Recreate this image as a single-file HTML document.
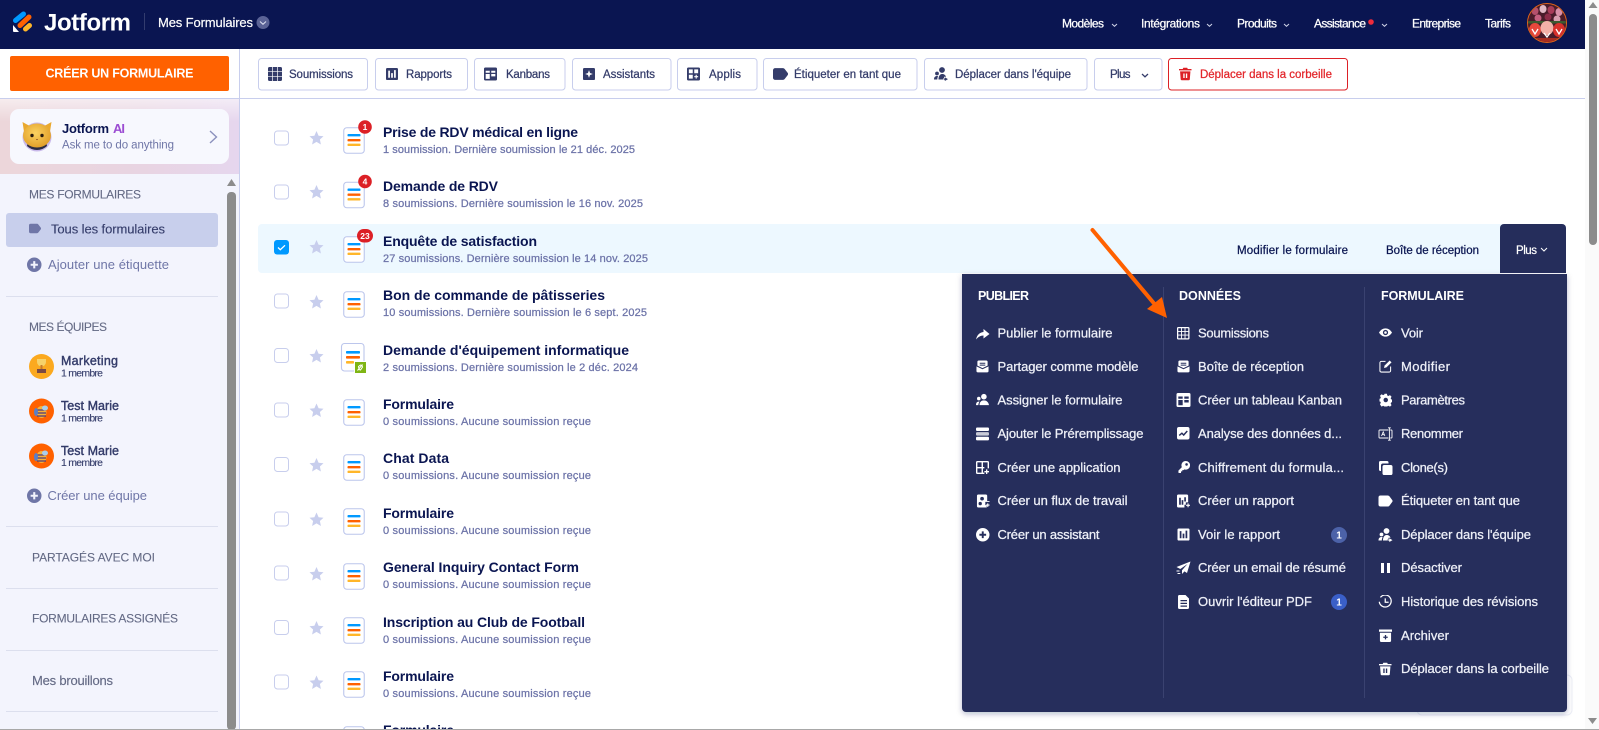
<!DOCTYPE html>
<html lang="fr">
<head>
<meta charset="utf-8">
<title>Jotform - Mes Formulaires</title>
<style>
html,body{margin:0;padding:0;width:1599px;height:730px;overflow:hidden;background:#fff}
svg{display:block;font-family:"Liberation Sans",sans-serif}
text{white-space:pre}
.nav{font-size:12px;fill:#fff;stroke:#fff;stroke-width:.25}
.sec{font-size:12px;fill:#646a85;stroke:#646a85;stroke-width:.1}
.side{font-size:13px;fill:#343c6a;stroke:#343c6a;stroke-width:.12}
.add{font-size:13px;fill:#6f76a7}
.tn{font-size:12.5px;fill:#343c6a;stroke:#343c6a;stroke-width:.4}
.ts{font-size:10.5px;fill:#343c6a;stroke:#343c6a;stroke-width:.1}
.tb{font-size:11.5px;fill:#343c6a;stroke:#343c6a;stroke-width:.25}
.title{font-size:14px;font-weight:bold;fill:#0a1551}
.sub{font-size:11px;fill:#6c73a8;stroke:#6c73a8;stroke-width:.25}
.act{font-size:11.5px;fill:#0a1551;stroke:#0a1551;stroke-width:.25}
.mh{font-size:12.5px;font-weight:bold;fill:#fff}
.mi{font-size:13px;fill:#eef0f8;stroke:#eef0f8;stroke-width:.25}
</style>
</head>
<body>
<svg width="1599" height="730" viewBox="0 0 1599 730" xmlns="http://www.w3.org/2000/svg">
<defs>
<linearGradient id="aibg" x1="0" y1="0" x2="1" y2="0">
  <stop offset="0" stop-color="#ecd6da"/><stop offset=".6" stop-color="#e8d4e2"/><stop offset="1" stop-color="#e6d6ee"/>
</linearGradient>
<linearGradient id="aitop" x1="0" y1="0" x2="0" y2="1">
  <stop offset="0" stop-color="#fff" stop-opacity=".55"/><stop offset=".3" stop-color="#fff" stop-opacity="0"/>
</linearGradient>
<radialGradient id="catf" cx=".45" cy=".4" r=".6">
  <stop offset="0" stop-color="#fbd261"/><stop offset="1" stop-color="#e2a02a"/>
</radialGradient>
<filter id="sh" x="-5%" y="-5%" width="110%" height="110%"><feDropShadow dx="0" dy="2" stdDeviation="3" flood-color="#0a1551" flood-opacity=".28"/></filter>
<clipPath id="prof"><circle cx="1547" cy="23" r="19"/></clipPath>

<symbol id="doc" viewBox="0 0 22 27">
  <rect x=".75" y=".75" width="20.5" height="25.5" rx="3" fill="#fff" stroke="#bcc6ec" stroke-width="1.1"/>
  <rect x="4.5" y="7" width="13" height="2.4" rx=".8" fill="#0099ff"/>
  <rect x="4.5" y="12" width="13" height="2.4" rx=".8" fill="#ff6100"/>
  <rect x="4.5" y="16.6" width="13" height="2.4" rx=".8" fill="#ffb629"/>
</symbol>
<symbol id="star" viewBox="-7 -7 14 14"><path fill="#c8ceed" d="M0-7 2.1-2.3 7-1.8 3.4 1.5 4.4 6.5 0 3.9-4.4 6.5-3.4 1.5-7-1.8-2.1-2.3z"/></symbol>
<symbol id="grid" viewBox="0 0 14 14"><path fill-rule="evenodd" d="M1.5 0h11A1.5 1.5 0 0 1 14 1.5v11a1.5 1.5 0 0 1-1.5 1.5h-11A1.5 1.5 0 0 1 0 12.5v-11A1.5 1.5 0 0 1 1.5 0zM1.4 1.4h3.1v3.1H1.4zM5.5 1.4h3v3.1h-3zM9.5 1.4h3.1v3.1H9.5zM1.4 5.5h3.1v3H1.4zM5.5 5.5h3v3h-3zM9.5 5.5h3.1v3H9.5zM1.4 9.5h3.1v3.1H1.4zM5.5 9.5h3v3.1h-3zM9.5 9.500h3.1v3.1H9.5z"/></symbol>
<symbol id="gridf" viewBox="0 0 14 14"><path d="M1.500 0h2.700v4.200H0V1.500A1.500 1.500 0 0 1 1.500 0zM4.900 0h4.200v4.200H4.900zM9.800 0h2.700A1.500 1.500 0 0 1 14 1.500v2.700H9.800zM0 4.900h4.200v4.200H0zM4.900 4.900h4.200v4.200H4.900zM9.800 4.900H14v4.200H9.800zM0 9.800h4.200V14H1.500A1.500 1.500 0 0 1 0 12.500zM4.900 9.800h4.200V14H4.900zM9.800 9.800H14v2.700a1.500 1.500 0 0 1-1.500 1.500H9.800z"/></symbol>
<symbol id="report" viewBox="0 0 14 14"><path fill-rule="evenodd" d="M1.500 0h11A1.500 1.500 0 0 1 14 1.500v11a1.500 1.500 0 0 1-1.500 1.500h-11A1.500 1.500 0 0 1 0 12.500v-11A1.500 1.500 0 0 1 1.500 0zM2.600 3h2v8.400h-2zM6 6h2v5.400H6zM9.400 2.500h2v8.900h-2z"/></symbol>
<symbol id="kanban" viewBox="0 0 14 14"><path fill-rule="evenodd" d="M1.500 0h11A1.500 1.500 0 0 1 14 1.500v11a1.500 1.500 0 0 1-1.500 1.500h-11A1.500 1.500 0 0 1 0 12.500v-11A1.500 1.500 0 0 1 1.500 0zM1.800 3.500h4.400v2.200H1.800zM7.800 3.500h4.400v2.200H7.800zM1.800 7h4.400v5.200H1.800zM7.800 7h4.400v2.500H7.800z"/></symbol>
<symbol id="assist" viewBox="0 0 14 14"><path fill-rule="evenodd" d="M1.500 0h11A1.500 1.500 0 0 1 14 1.500v11a1.500 1.500 0 0 1-1.500 1.500h-11A1.500 1.500 0 0 1 0 12.500v-11A1.500 1.500 0 0 1 1.500 0zM7 2.500 8.200 5.800 11.500 7 8.200 8.200 7 11.500 5.800 8.200 2.500 7 5.800 5.800z"/></symbol>
<symbol id="apps" viewBox="0 0 14 14"><path fill-rule="evenodd" d="M1.500 0h11A1.500 1.500 0 0 1 14 1.500v11a1.500 1.500 0 0 1-1.500 1.500h-11A1.500 1.500 0 0 1 0 12.500v-11A1.500 1.500 0 0 1 1.500 0zM2 2h4.200v4.200H2zM7.800 2H12v4.200H7.800zM2 7.800h4.200V12H2zM9.300 7.800h1.200v1.500H12v1.200h-1.500V12H9.300v-1.500H7.800V9.300h1.500z"/></symbol>
<symbol id="appso" viewBox="0 0 14 14"><path fill-rule="evenodd" d="M1.500 0h11A1.500 1.500 0 0 1 14 1.500V8h-1.500V1.500h-5v5H9V8H7.500v4.500H9V14H1.500A1.500 1.500 0 0 1 0 12.500v-11A1.500 1.500 0 0 1 1.500 0zM1.500 1.500v5h4.500v-5zM1.500 8v4.500h4.500V8zM10.800 9h1.400v1.800H14v1.400h-1.800V14h-1.400v-1.800H9v-1.400h1.800z"/></symbol>
<symbol id="tag" viewBox="0 0 14 14"><path d="M2 1.500h7.300a2 2 0 0 1 1.600.8l2.800 3.700a1.600 1.600 0 0 1 0 2l-2.800 3.700a2 2 0 0 1-1.600.8H2a2 2 0 0 1-2-2v-7a2 2 0 0 1 2-2z"/></symbol>
<symbol id="team" viewBox="0 0 14 14"><circle cx="8" cy="3" r="2.900"/><circle cx="3" cy="6.500" r="1.900"/><path d="M4.500 12.500C4.500 9 6 7 8 7s3.500 1 4 2.800H10v2.700zM0 12.500C0 10 1.300 9 3 9c.5 0 .9.100 1.200.300-.6 1-.9 2-.9 3.200zM10.800 10.200v1.300H9v1.200h1.800V14L14 12.100z"/></symbol>
<symbol id="trash" viewBox="0 0 14 14"><path fill-rule="evenodd" d="M4.800 0h4.400l.6 1.400H14V3H0V1.400h4.200zM1.200 4h11.600l-.7 9a1.100 1.100 0 0 1-1.100 1H3a1.100 1.100 0 0 1-1.100-1zM4.800 6.500h1.500v5H4.800zM7.700 6.500h1.500v5H7.700z"/></symbol>
<symbol id="plusc" viewBox="0 0 14 14"><path fill-rule="evenodd" d="M7 0a7 7 0 1 1 0 14A7 7 0 0 1 7 0zM6 3.500V6H3.500v2H6v2.500h2V8h2.500V6H8V3.500z"/></symbol>
<symbol id="inbox" viewBox="0 0 14 14"><path d="M3 .5h8A1.500 1.500 0 0 1 12.500 2v4L7 8.700 1.500 6V2A1.500 1.500 0 0 1 3 .5z"/><path d="M.5 6.800 7 10l6.500-3.200v5A1.500 1.500 0 0 1 12 13.300H2a1.500 1.500 0 0 1-1.500-1.500z"/><path d="M4 3h6v1.100H4zM4 5h6v1.100H4z" fill="#252d5b"/></symbol>
<symbol id="assign" viewBox="0 0 14 14"><circle cx="8.500" cy="4" r="3"/><circle cx="3" cy="6" r="1.900"/><path d="M3.800 13c0-3.200 2-5 4.700-5s4.900 1.800 5.500 5zM0 13c0-2.300 1-3.700 3-3.700.3 0 .6 0 .9.100-.9 1-1.300 2.200-1.400 3.600z"/></symbol>
<symbol id="bars" viewBox="0 0 14 14"><rect x="0" y="0" width="14" height="3.800" rx="1.200"/><rect x="0" y="5" width="14" height="3.800" rx="1.200" opacity=".75"/><rect x="0" y="10" width="14" height="3.800" rx="1.200"/></symbol>
<symbol id="flow" viewBox="0 0 14 14"><path fill-rule="evenodd" d="M2 0h8a1.500 1.500 0 0 1 1.500 1.500V7H14v1H9.500v3.500H11V14H2A1.500 1.500 0 0 1 .5 12.500v-11A1.500 1.500 0 0 1 2 0zM6 2.500a2 2 0 1 0 0 4 2 2 0 0 0 0-4zM4 8a1.800 1.800 0 1 0 0 3.600A1.800 1.800 0 0 0 4 8z"/><path d="M11.500 9.500h1.200v1.300H14V12h-1.300v1.300h-1.200V12h-1.300v-1.200h1.300z"/></symbol>
<symbol id="analytics" viewBox="0 0 14 14"><rect width="14" height="14" rx="2.200"/><path d="M2.500 9.500 5.500 7l2 2L11.500 4.500" fill="none" stroke="#252d5b" stroke-width="1.600"/></symbol>
<symbol id="key" viewBox="0 0 14 14"><path fill-rule="evenodd" d="M9 0a5 5 0 1 1-1.600 9.700L6.500 10.600H5v1.500H3.500V14H1l-.5-.5v-2.300l4-4A5 5 0 0 1 9 0zM10 2.500a1.500 1.500 0 1 0 0 3 1.500 1.500 0 0 0 0-3z"/></symbol>
<symbol id="report2" viewBox="0 0 14 14"><path fill-rule="evenodd" d="M1.500 0h9A1.500 1.500 0 0 1 12 1.500V8.500H9.500V11H8v3H1.500A1.500 1.500 0 0 1 0 12.500v-11A1.500 1.500 0 0 1 1.500 0zM2.300 3.500h1.800V11H2.300zM5 6h1.800v5H5zM7.800 3h1.800v4.500H7.800z"/><path d="M11.300 9.500h1.200v1.500H14v1.200h-1.500v1.500h-1.200v-1.500H9.800V11h1.500z"/></symbol>
<symbol id="plane" viewBox="0 0 14 14"><path d="M14 .5 0 6l3.800 2L11 3 5.500 9.300V13l2.500-2.600L10.500 12z"/><path d="M0 9.500h3v1H0zM1 12h2.800v1H1z"/></symbol>
<symbol id="pdf" viewBox="0 0 14 14"><path fill-rule="evenodd" d="M2.500 0H9l3.500 3.500v9A1.500 1.500 0 0 1 11 14H3a1.500 1.500 0 0 1-1.500-1.500v-11A1.500 1.500 0 0 1 2.500 0zM4 5v1.200h6.500V5zM4 7.800V9h6.500V7.800zM4 10.500v1.200h6.500v-1.200z"/></symbol>
<symbol id="eye" viewBox="0 0 14 14"><path fill-rule="evenodd" d="M0 7c1.800-3 4.300-4.500 7-4.500S12.200 4 14 7c-1.800 3-4.300 4.500-7 4.500S1.800 10 0 7zM7 4.200a2.800 2.800 0 1 0 0 5.600 2.800 2.800 0 0 0 0-5.600z"/><circle cx="7" cy="7" r="1.400"/></symbol>
<symbol id="edit" viewBox="0 0 14 14"><path d="M7 1.500H2.500a1.500 1.500 0 0 0-1.500 1.500v8.500A1.500 1.500 0 0 0 2.500 13H11a1.500 1.500 0 0 0 1.500-1.500V7" fill="none" stroke="currentColor" stroke-width="1.100"/><path d="M11.500.5l2 2L8 8l-2.600.6L6 6z"/></symbol>
<symbol id="gear" viewBox="0 0 14 14"><path fill-rule="evenodd" d="M5.700 0h2.600l.4 1.900 1.300.6 1.700-1 1.800 1.800-1 1.700.6 1.300 1.900.4v2.600l-1.900.4-.6 1.300 1 1.700-1.800 1.800-1.700-1-1.300.6-.4 1.900H5.700l-.4-1.900-1.300-.6-1.700 1L.5 11.800l1-1.700-.6-1.300L-1 8.400V5.800l1.900-.4.600-1.300-1-1.700L2.300.6l1.700 1 1.300-.6zM7 4.500a2.500 2.500 0 1 0 0 5 2.500 2.500 0 0 0 0-5z"/></symbol>
<symbol id="rename" viewBox="0 0 14 14"><path d="M10 3H1.200a.7.700 0 0 0-.7.700v6.600a.7.700 0 0 0 .7.700H10M11.800 3h1a.7.700 0 0 1 .7.700v6.600a.7.700 0 0 1-.7.700h-1M10.900 1v12M9.500.8h2.800M9.500 13.200h2.800" fill="none" stroke="currentColor" stroke-width=".9"/><path d="M3 9l1.700-4.200L6.400 9M3.600 7.700h2.200" fill="none" stroke="currentColor" stroke-width=".8"/></symbol>
<symbol id="clone" viewBox="0 0 14 14"><path d="M2 0h6.500A1.500 1.500 0 0 1 10 1.500V2.500H4.500a2 2 0 0 0-2 2V10H2A1.500 1.500 0 0 1 .5 8.500v-7A1.500 1.500 0 0 1 2 0z"/><rect x="4" y="4" width="10" height="10" rx="1.800"/></symbol>
<symbol id="hist" viewBox="0 0 14 14"><path d="M2 2.500A6.200 6.200 0 1 1 .8 7M7 3.500V7.500H10.500" fill="none" stroke="currentColor" stroke-width="1.300"/></symbol>
<symbol id="arch" viewBox="0 0 14 14"><path fill-rule="evenodd" d="M0 .5h14V3H0zM1 4h12v8.500a1.500 1.500 0 0 1-1.500 1.500h-9A1.500 1.500 0 0 1 1 12.500zM6.300 6.500V8.200H4.600v1.300h1.700v1.700h1.400V9.500h1.700V8.200H7.700V6.500z"/></symbol>
</defs>

<!-- Page -->
<rect width="1599" height="730" fill="#fff"/>

<!-- Browser scrollbar -->
<rect x="1585" y="0" width="14" height="730" fill="#fafafa"/>
<path d="M1593 2l4.500 6h-9z" fill="#8c8c8c"/>
<rect x="1589" y="14" width="8" height="231" rx="4" fill="#8c8c8c"/>
<path d="M1588 718h9l-4.500 6z" fill="#8c8c8c"/>

<!-- Sidebar -->
<rect x="0" y="49" width="239" height="681" fill="#fff"/>
<rect x="0" y="99" width="239" height="75" fill="url(#aibg)"/>
<rect x="0" y="99" width="239" height="75" fill="url(#aitop)"/>
<rect x="0" y="174" width="239" height="556" fill="#f3f4fd"/>
<rect x="239" y="49" width="1" height="681" fill="#c8ceed"/>
<rect x="0" y="98" width="1585" height="1" fill="#c8ceed"/>
<rect x="10" y="56" width="219" height="35" rx="2" fill="#ff6100"/>
<text x="45.5" y="77.5" font-size="12.5" font-weight="bold" fill="#fff" textLength="148">CRÉER UN FORMULAIRE</text>

<!-- Jotform AI card -->
<rect x="10" y="109" width="219" height="55" rx="9" fill="#f7f8fe"/>
<circle cx="37" cy="137" r="14.5" fill="#c9b9ea"/>
<path d="M27 146a10 7 0 0 1 20 0 14.5 14.5 0 0 1-20 0z" fill="#2c2d44"/>
<path d="M22.500 122l9 5-7 8zM51.500 122l-9 5 7 8z" fill="#eaa92f"/>
<ellipse cx="37" cy="135.500" rx="14" ry="12" fill="url(#catf)"/>
<circle cx="32" cy="135.500" r="1.700" fill="#2a1c10"/><circle cx="42" cy="135.500" r="1.700" fill="#2a1c10"/>
<path d="M36 139h2l-1 1.200z" fill="#7a3d1a"/>
<text x="62" y="133" font-size="13" font-weight="bold" fill="#0a1551" textLength="47">Jotform</text>
<text x="113" y="133" font-size="13" font-weight="bold" fill="#9c4dd3" textLength="12">AI</text>
<text x="62" y="148.500" font-size="11.5" fill="#6f76a7" textLength="112">Ask me to do anything</text>
<path d="M210 131l6.500 6-6.500 6" fill="none" stroke="#8b91bd" stroke-width="1.400"/>

<!-- Sidebar scrollbar -->
<path d="M231.500 179l4.500 7h-9z" fill="#8c8c8c"/>
<rect x="227" y="192" width="9" height="538" rx="4" fill="#8c8c8c"/>

<!-- Sidebar menu -->
<text class="sec" x="29" y="198.500" textLength="112">MES FORMULAIRES</text>
<rect x="6" y="213" width="212" height="34" rx="3" fill="#c8cfec"/>
<use href="#tag" x="29" y="222" width="12" height="13" fill="#6f76a7"/>
<text class="side" x="51" y="233.500" textLength="114">Tous les formulaires</text>
<use href="#plusc" x="27" y="257.500" width="14.5" height="14.5" fill="#6f76a7"/>
<text class="add" x="48" y="269" textLength="121">Ajouter une étiquette</text>
<rect x="6" y="296" width="212" height="1" fill="#dcdfee"/>
<text class="sec" x="29" y="331" textLength="78">MES ÉQUIPES</text>

<circle cx="41.5" cy="366.5" r="12.5" fill="#fba91f"/>
<path d="M37 359h9v3a4.500 4.500 0 0 1-9 0z" fill="#f6d26a"/><rect x="40.500" y="365" width="2" height="4" fill="#c77a2a"/><rect x="37" y="369" width="9" height="4" fill="#7a4a45"/>
<text class="tn" x="61" y="365" textLength="57">Marketing</text>
<text class="ts" x="61" y="376.5" textLength="42">1 membre</text>

<circle cx="41.5" cy="411" r="12.5" fill="#ff6100"/><ellipse cx="41.5" cy="412" rx="5" ry="6" fill="#f6b13a"/><path d="M37 410h9M37 413h9M37 416h9" stroke="#4d3a7a" stroke-width="1.200"/><ellipse cx="36" cy="412" rx="2" ry="4" fill="#5c7fc4"/><ellipse cx="45" cy="408" rx="3" ry="2.500" fill="#a9cdea"/>
<text class="tn" x="61" y="410" textLength="58">Test Marie</text>
<text class="ts" x="61" y="421.5" textLength="42">1 membre</text>

<g transform="translate(0,45)"><circle cx="41.5" cy="411" r="12.5" fill="#ff6100"/><ellipse cx="41.5" cy="412" rx="5" ry="6" fill="#f6b13a"/><path d="M37 410h9M37 413h9M37 416h9" stroke="#4d3a7a" stroke-width="1.200"/><ellipse cx="36" cy="412" rx="2" ry="4" fill="#5c7fc4"/><ellipse cx="45" cy="408" rx="3" ry="2.500" fill="#a9cdea"/></g>
<text class="tn" x="61" y="455" textLength="58">Test Marie</text>
<text class="ts" x="61" y="466" textLength="42">1 membre</text>

<use href="#plusc" x="27" y="488.500" width="14.5" height="14.5" fill="#6f76a7"/>
<text class="add" x="47.5" y="500" textLength="99.5">Créer une équipe</text>
<rect x="6" y="526" width="212" height="1" fill="#dcdfee"/>
<text class="sec" x="32" y="561.5" textLength="123">PARTAGÉS AVEC MOI</text>
<rect x="6" y="588" width="212" height="1" fill="#dcdfee"/>
<text class="sec" x="32" y="622.5" textLength="146">FORMULAIRES ASSIGNÉS</text>
<rect x="6" y="650" width="212" height="1" fill="#dcdfee"/>
<text x="32" y="685" font-size="13" fill="#646a85" stroke="#646a85" stroke-width=".15" textLength="81">Mes brouillons</text>
<rect x="6" y="711" width="212" height="1" fill="#dcdfee"/>

<!-- Header -->
<rect x="0" y="0" width="1585" height="49" fill="#0a1551"/>
<path d="M15.500 20.500l8-6.500" stroke="#0099ff" stroke-width="5" stroke-linecap="round"/>
<path d="M20 25.500l9-8.500" stroke="#ff6100" stroke-width="5" stroke-linecap="round"/>
<path d="M25.500 29l4-3.500" stroke="#ffb629" stroke-width="5" stroke-linecap="round"/>
<path d="M13 25l6 7h-5a1 1 0 0 1-1-1z" fill="#fff"/>
<text x="44" y="30.500" font-size="24" font-weight="bold" fill="#fff" textLength="87">Jotform</text>
<rect x="144" y="13" width="1" height="17" fill="#333c6e"/>
<text x="158" y="27" font-size="13" fill="#fff" stroke="#fff" stroke-width=".2" textLength="95">Mes Formulaires</text>
<circle cx="263" cy="22.500" r="6.500" fill="#5b6396"/>
<path d="M260 21.500l3 2.800 3-2.800" fill="none" stroke="#dfe2f2" stroke-width="1"/>

<text class="nav" x="1062" y="27.500" textLength="42">Modèles</text>
<path d="M1112 24l2.500 2.300 2.500-2.300" fill="none" stroke="#cfd3e8" stroke-width="1"/>
<text class="nav" x="1141" y="27.500" textLength="59">Intégrations</text>
<path d="M1207 24l2.500 2.300 2.500-2.300" fill="none" stroke="#cfd3e8" stroke-width="1"/>
<text class="nav" x="1237" y="27.500" textLength="40">Produits</text>
<path d="M1284 24l2.500 2.300 2.500-2.300" fill="none" stroke="#cfd3e8" stroke-width="1"/>
<text class="nav" x="1314" y="27.500" textLength="52">Assistance</text>
<circle cx="1371" cy="22" r="2.800" fill="#ef2b3c"/>
<path d="M1382 24l2.500 2.300 2.500-2.300" fill="none" stroke="#cfd3e8" stroke-width="1"/>
<text class="nav" x="1412" y="27.500" textLength="49">Entreprise</text>
<text class="nav" x="1485" y="27.500" textLength="26">Tarifs</text>

<circle cx="1547" cy="23" r="19.5" fill="#7a2a1a" stroke="#e0641a" stroke-width="1"/>
<g clip-path="url(#prof)">
  <rect x="1527" y="3" width="40" height="40" fill="#4a1c2a"/>
  <ellipse cx="1535" cy="11" rx="3.500" ry="4" fill="#b4506c"/><ellipse cx="1543" cy="9" rx="3.500" ry="4" fill="#e0b8c4"/><ellipse cx="1551" cy="10" rx="3.500" ry="4" fill="#a83c58"/><ellipse cx="1559" cy="12" rx="3.500" ry="4" fill="#d890a8"/>
  <ellipse cx="1538" cy="18" rx="3.500" ry="3.500" fill="#c46080"/><ellipse cx="1548" cy="17" rx="3.500" ry="3.500" fill="#8c2c48"/><ellipse cx="1557" cy="19" rx="3.500" ry="3.500" fill="#d8a0b0"/>
  <rect x="1527" y="21" width="40" height="2.500" fill="#3c5a30"/>
  <ellipse cx="1535" cy="30" rx="6" ry="7" fill="#e8483c"/><ellipse cx="1547" cy="28" rx="6.500" ry="7" fill="#f3b0a8"/><ellipse cx="1559" cy="30" rx="6" ry="7" fill="#d8302c"/>
  <path d="M1532 29l3 5 3-5M1544 33l3 4 3-4M1556 29l3 5 3-5" stroke="#fff" stroke-width="1.300" fill="none"/>
  <rect x="1527" y="38" width="40" height="6" fill="#a82c20"/>
</g>

<!-- Toolbar -->
<g fill="#fff" stroke="#c8ceed" stroke-width="1">
  <rect x="258.500" y="58.500" width="109" height="31.500" rx="3"/>
  <rect x="375.500" y="58.500" width="92" height="31.500" rx="3"/>
  <rect x="474.500" y="58.500" width="90.500" height="31.500" rx="3"/>
  <rect x="572.500" y="58.500" width="98.500" height="31.500" rx="3"/>
  <rect x="677.500" y="58.500" width="79.500" height="31.500" rx="3"/>
  <rect x="763.500" y="58.500" width="153.500" height="31.500" rx="3"/>
  <rect x="924.500" y="58.500" width="162.500" height="31.500" rx="3"/>
  <rect x="1094.500" y="58.500" width="67.500" height="31.500" rx="3"/>
  <rect x="1168.500" y="58.500" width="179" height="31.500" rx="3" stroke="#dc2026"/>
</g>
<use href="#gridf" x="268" y="67" width="14" height="14" fill="#343c6a"/>
<text class="tb" x="289" y="78" textLength="64">Soumissions</text>
<use href="#report" x="386" y="66.500" width="12" height="15" preserveAspectRatio="none" fill="#343c6a"/>
<text class="tb" x="406" y="78" textLength="46">Rapports</text>
<use href="#kanban" x="484" y="67" width="13" height="14" preserveAspectRatio="none" fill="#343c6a"/>
<text class="tb" x="506" y="78" textLength="44">Kanbans</text>
<use href="#assist" x="583" y="66.500" width="12" height="15" preserveAspectRatio="none" fill="#343c6a"/>
<text class="tb" x="603" y="78" textLength="52">Assistants</text>
<use href="#apps" x="687" y="67" width="13" height="14" preserveAspectRatio="none" fill="#343c6a"/>
<text class="tb" x="709" y="78" textLength="32">Applis</text>
<use href="#tag" x="773" y="66.500" width="15" height="15" fill="#343c6a"/>
<text class="tb" x="794" y="78" textLength="107">Étiqueter en tant que</text>
<use href="#team" x="934" y="67" width="14" height="14" fill="#343c6a"/>
<text class="tb" x="955" y="78" textLength="116">Déplacer dans l'équipe</text>
<text class="tb" x="1110" y="78" textLength="20.5">Plus</text>
<path d="M1142 74l3 2.800 3-2.800" fill="none" stroke="#343c6a" stroke-width="1.300"/>
<use href="#trash" x="1179" y="66.500" width="12.500" height="15" preserveAspectRatio="none" fill="#dc2026"/>
<text x="1200" y="78" font-size="11.5" fill="#e3262b" stroke="#e3262b" stroke-width=".25" textLength="132">Déplacer dans la corbeille</text>

<!-- Selected row -->
<rect x="258" y="224" width="1308" height="49" rx="4" fill="#edf8ff"/>

<!-- Row checkboxes -->
<g fill="#fff" stroke="#c8ceed" stroke-width="1">
  <rect x="274.500" y="131" width="14" height="14" rx="3"/>
  <rect x="274.500" y="185" width="14" height="14" rx="3"/>
  <rect x="274.500" y="294" width="14" height="14" rx="3"/>
  <rect x="274.500" y="348.500" width="14" height="14" rx="3"/>
  <rect x="274.500" y="403" width="14" height="14" rx="3"/>
  <rect x="274.500" y="457.500" width="14" height="14" rx="3"/>
  <rect x="274.500" y="512" width="14" height="14" rx="3"/>
  <rect x="274.500" y="566" width="14" height="14" rx="3"/>
  <rect x="274.500" y="620.500" width="14" height="14" rx="3"/>
  <rect x="274.500" y="675" width="14" height="14" rx="3"/>
</g>
<rect x="274" y="240" width="15" height="14.5" rx="3" fill="#0099ff"/>
<path d="M278 247.500l2.300 2.200 4.700-4.400" fill="none" stroke="#fff" stroke-width="1.300"/>

<!-- Row stars -->
<use href="#star" x="309.500" y="131" width="14" height="14"/>
<use href="#star" x="309.500" y="185" width="14" height="14"/>
<use href="#star" x="309.500" y="240" width="14" height="14"/>
<use href="#star" x="309.500" y="295" width="14" height="14"/>
<use href="#star" x="309.500" y="349" width="14" height="14"/>
<use href="#star" x="309.500" y="403.500" width="14" height="14"/>
<use href="#star" x="309.500" y="458" width="14" height="14"/>
<use href="#star" x="309.500" y="512.500" width="14" height="14"/>
<use href="#star" x="309.500" y="567" width="14" height="14"/>
<use href="#star" x="309.500" y="621" width="14" height="14"/>
<use href="#star" x="309.500" y="675.500" width="14" height="14"/>

<!-- Row form icons -->
<use href="#doc" x="343" y="127" width="22" height="27"/>
<use href="#doc" x="343" y="181.500" width="22" height="27"/>
<use href="#doc" x="343" y="236" width="22" height="27"/>
<use href="#doc" x="343" y="291" width="22" height="27"/>
<use href="#doc" x="343" y="399" width="22" height="27"/>
<use href="#doc" x="343" y="454" width="22" height="27"/>
<use href="#doc" x="343" y="508" width="22" height="27"/>
<use href="#doc" x="343" y="563" width="22" height="27"/>
<use href="#doc" x="343" y="617" width="22" height="27"/>
<use href="#doc" x="343" y="671" width="22" height="27"/>
<use href="#doc" x="343" y="726" width="22" height="27"/>
<rect x="341.500" y="343.500" width="22.500" height="27.500" rx="3" fill="#fff" stroke="#bcc6ec" stroke-width="1.100"/>
<rect x="346" y="351" width="14" height="2.600" rx=".8" fill="#0099ff"/>
<rect x="346" y="356" width="14" height="2.600" rx=".8" fill="#ff6100"/>
<rect x="346" y="361" width="8" height="2.600" rx=".8" fill="#ffb629"/>
<rect x="354.500" y="361.500" width="12" height="12" fill="#7fb514" stroke="#fff" stroke-width="1"/>
<path d="M357.500 370.500l5-6M358.500 366.500l2-1.500 1.500.5.500 1.500-2 3-1.500-.5z" fill="none" stroke="#fff" stroke-width="1"/>

<!-- Badges -->
<circle cx="365" cy="127" r="6.800" fill="#dc2026"/>
<text x="365" y="130" font-size="8.5" font-weight="bold" fill="#fff" text-anchor="middle">1</text>
<circle cx="365" cy="181.500" r="6.800" fill="#dc2026"/>
<text x="365" y="184.500" font-size="8.5" font-weight="bold" fill="#fff" text-anchor="middle">4</text>
<rect x="357" y="229" width="16" height="13.500" rx="6.800" fill="#dc2026"/>
<text x="365" y="238.800" font-size="8.5" font-weight="bold" fill="#fff" text-anchor="middle">23</text>

<!-- Row text -->
<text class="title" x="383" y="137" textLength="195">Prise de RDV médical en ligne</text>
<text class="sub" x="383" y="153" textLength="252">1 soumission. Dernière soumission le 21 déc. 2025</text>
<text class="title" x="383" y="191" textLength="115">Demande de RDV</text>
<text class="sub" x="383" y="207" textLength="260">8 soumissions. Dernière soumission le 16 nov. 2025</text>
<text class="title" x="383" y="246" textLength="154">Enquête de satisfaction</text>
<text class="sub" x="383" y="262" textLength="265">27 soumissions. Dernière soumission le 14 nov. 2025</text>
<text class="title" x="383" y="300" textLength="222">Bon de commande de pâtisseries</text>
<text class="sub" x="383" y="316" textLength="264">10 soumissions. Dernière soumission le 6 sept. 2025</text>
<text class="title" x="383" y="355" textLength="246">Demande d'équipement informatique</text>
<text class="sub" x="383" y="371" textLength="255">2 soumissions. Dernière soumission le 2 déc. 2024</text>
<text class="title" x="383" y="409" textLength="71">Formulaire</text>
<text class="sub" x="383" y="425" textLength="208">0 soumissions. Aucune soumission reçue</text>
<text class="title" x="383" y="463" textLength="66">Chat Data</text>
<text class="sub" x="383" y="479" textLength="208">0 soumissions. Aucune soumission reçue</text>
<text class="title" x="383" y="518" textLength="71">Formulaire</text>
<text class="sub" x="383" y="534" textLength="208">0 soumissions. Aucune soumission reçue</text>
<text class="title" x="383" y="572" textLength="196">General Inquiry Contact Form</text>
<text class="sub" x="383" y="588" textLength="208">0 soumissions. Aucune soumission reçue</text>
<text class="title" x="383" y="627" textLength="202">Inscription au Club de Football</text>
<text class="sub" x="383" y="643" textLength="208">0 soumissions. Aucune soumission reçue</text>
<text class="title" x="383" y="681" textLength="71">Formulaire</text>
<text class="sub" x="383" y="697" textLength="208">0 soumissions. Aucune soumission reçue</text>
<text class="title" x="383" y="735" textLength="71">Formulaire</text>

<!-- Row actions -->
<text class="act" x="1237" y="254" textLength="111">Modifier le formulaire</text>
<text class="act" x="1386" y="254" textLength="93">Boîte de réception</text>
<path d="M1500 273v-45a4 4 0 0 1 4-4h58a4 4 0 0 1 4 4v45z" fill="#252d5b"/>
<text x="1516" y="254" font-size="11.5" fill="#fff" stroke="#fff" stroke-width=".2" textLength="21">Plus</text>
<path d="M1541 248l3 3 3-3" fill="none" stroke="#fff" stroke-width="1"/>

<!-- Dropdown menu -->
<rect x="1417" y="675" width="155" height="40" rx="5" fill="#fff" stroke="#eceef6"/>
<path d="M962 274H1567V708a4 4 0 0 1-4 4H966a4 4 0 0 1-4-4z" fill="#252d5b" filter="url(#sh)"/>
<rect x="1163" y="287" width="1" height="411" fill="#3a4270"/>
<rect x="1364" y="287" width="1" height="411" fill="#3a4270"/>

<text class="mh" x="978" y="300" textLength="51">PUBLIER</text>
<text class="mh" x="1179" y="300" textLength="62">DONNÉES</text>
<text class="mh" x="1381" y="300" textLength="83">FORMULAIRE</text>

<g fill="#fff" color="#fff">
<!-- Publier -->
<path d="M976 339.500c1-4.500 3.500-7 7.500-7.500v-3l6 5-6 4.500v-3c-3 0-5.500 1.500-7.500 4z"/>
<use href="#inbox" x="976" y="360" width="13" height="13"/>
<use href="#assign" x="976" y="393" width="13" height="13"/>
<use href="#bars" x="976" y="427.500" width="13" height="13"/>
<use href="#appso" x="976" y="461" width="13" height="13"/>
<use href="#flow" x="976.500" y="494" width="13" height="14"/>
<use href="#plusc" x="976" y="528" width="13.5" height="13.5"/>
<!-- Données -->
<use href="#grid" x="1177" y="327" width="12.5" height="12.5"/>
<use href="#inbox" x="1177" y="360" width="13" height="13"/>
<use href="#kanban" x="1176.500" y="393" width="14" height="14"/>
<use href="#analytics" x="1177" y="427" width="12.5" height="12.5"/>
<use href="#key" x="1178" y="461" width="12" height="12"/>
<use href="#report2" x="1177" y="494" width="13" height="14"/>
<use href="#report" x="1177.500" y="528" width="12" height="13"/>
<use href="#plane" x="1176.500" y="561" width="14" height="14"/>
<use href="#pdf" x="1176.500" y="595" width="14" height="14"/>
<!-- Formulaire -->
<use href="#eye" x="1379" y="326" width="13" height="13"/>
<use href="#edit" x="1379" y="360" width="13" height="13"/>
<use href="#gear" x="1379.500" y="393.500" width="12.5" height="13"/>
<use href="#rename" x="1378.500" y="427" width="14" height="14"/>
<use href="#clone" x="1378.500" y="461" width="14" height="14"/>
<use href="#tag" x="1378.500" y="494" width="14" height="14"/>
<use href="#team" x="1378.500" y="528" width="14" height="14"/>
<rect x="1381" y="563" width="3" height="10"/><rect x="1387" y="563" width="3" height="10"/>
<use href="#hist" x="1378.500" y="595" width="13.5" height="13.5"/>
<use href="#arch" x="1379" y="629" width="13" height="13"/>
<use href="#trash" x="1379" y="662" width="12.5" height="14"/>
</g>

<text class="mi" x="997.500" y="337.500" textLength="115">Publier le formulaire</text>
<text class="mi" x="997.500" y="371" textLength="141">Partager comme modèle</text>
<text class="mi" x="997.500" y="404.500" textLength="125">Assigner le formulaire</text>
<text class="mi" x="997.500" y="438" textLength="146">Ajouter le Préremplissage</text>
<text class="mi" x="997.500" y="472" textLength="123">Créer une application</text>
<text class="mi" x="997.500" y="505" textLength="130">Créer un flux de travail</text>
<text class="mi" x="997.500" y="539" textLength="102">Créer un assistant</text>

<text class="mi" x="1198" y="337.500" textLength="71">Soumissions</text>
<text class="mi" x="1198" y="371" textLength="106">Boîte de réception</text>
<text class="mi" x="1198" y="404.500" textLength="144">Créer un tableau Kanban</text>
<text class="mi" x="1198" y="438" textLength="144">Analyse des données d...</text>
<text class="mi" x="1198" y="472" textLength="146">Chiffrement du formula...</text>
<text class="mi" x="1198" y="505" textLength="96">Créer un rapport</text>
<text class="mi" x="1198" y="539" textLength="82">Voir le rapport</text>
<text class="mi" x="1198" y="572" textLength="148">Créer un email de résumé</text>
<text class="mi" x="1198" y="606" textLength="114">Ouvrir l'éditeur PDF</text>
<circle cx="1339" cy="535" r="8" fill="#4c62a8"/>
<text x="1339" y="538.500" font-size="10" font-weight="bold" fill="#fff" text-anchor="middle">1</text>
<circle cx="1339" cy="602" r="8" fill="#3a5fc8"/>
<text x="1339" y="605.500" font-size="10" font-weight="bold" fill="#fff" text-anchor="middle">1</text>

<text class="mi" x="1401" y="337.500" textLength="22">Voir</text>
<text class="mi" x="1401" y="371" textLength="49">Modifier</text>
<text class="mi" x="1401" y="404.500" textLength="64">Paramètres</text>
<text class="mi" x="1401" y="438" textLength="62">Renommer</text>
<text class="mi" x="1401" y="472" textLength="47">Clone(s)</text>
<text class="mi" x="1401" y="505" textLength="119">Étiqueter en tant que</text>
<text class="mi" x="1401" y="539" textLength="130">Déplacer dans l'équipe</text>
<text class="mi" x="1401" y="572" textLength="61">Désactiver</text>
<text class="mi" x="1401" y="606" textLength="137">Historique des révisions</text>
<text class="mi" x="1401" y="640" textLength="48">Archiver</text>
<text class="mi" x="1401" y="673" textLength="148">Déplacer dans la corbeille</text>

<!-- Annotation arrow -->
<path d="M1092.500 230 1157 307" stroke="#ff6100" stroke-width="4" fill="none" stroke-linecap="round"/>
<path d="M1167 318 1147 309 1162 297z" fill="#ff6100"/>

<!-- Bottom edge -->
<rect x="0" y="729" width="1599" height="1" fill="#a8a8a8"/>
</svg>
</body>
</html>
